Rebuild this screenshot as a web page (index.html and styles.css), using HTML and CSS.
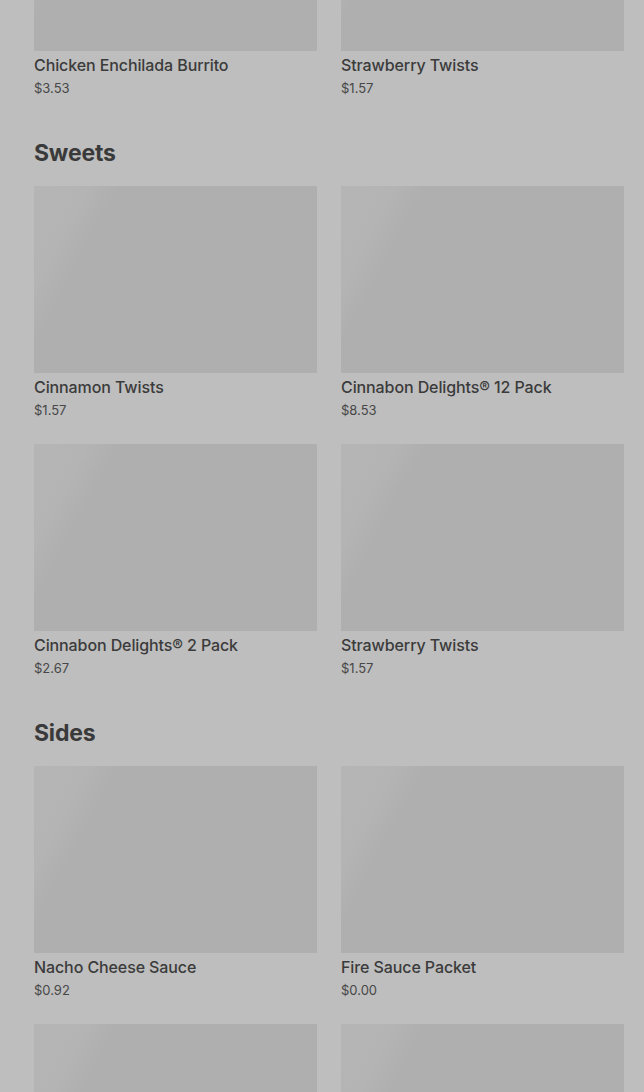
FILE: index.html
```html
<!DOCTYPE html>
<html lang="en">
<head>
    <meta charset="UTF-8">
    <meta name="viewport" content="width=device-width, initial-scale=1.0">
    <title>Menu</title>
    <link rel="stylesheet" href="styles.css">
</head>
<body>
    <div class="menu">
        <section class="section">
            <div class="grid">
                <div class="item">
                    <div class="thumb"></div>
                    <div class="name">Chicken Enchilada Burrito</div>
                    <div class="price">$3.53</div>
                </div>
                <div class="item">
                    <div class="thumb"></div>
                    <div class="name">Strawberry Twists</div>
                    <div class="price">$1.57</div>
                </div>
            </div>
        </section>

        <section class="section">
            <h2>Sweets</h2>
            <div class="grid">
                <div class="item">
                    <div class="thumb"></div>
                    <div class="name">Cinnamon Twists</div>
                    <div class="price">$1.57</div>
                </div>
                <div class="item">
                    <div class="thumb"></div>
                    <div class="name">Cinnabon Delights® 12 Pack</div>
                    <div class="price">$8.53</div>
                </div>
                <div class="item">
                    <div class="thumb"></div>
                    <div class="name">Cinnabon Delights® 2 Pack</div>
                    <div class="price">$2.67</div>
                </div>
                <div class="item">
                    <div class="thumb"></div>
                    <div class="name">Strawberry Twists</div>
                    <div class="price">$1.57</div>
                </div>
            </div>
        </section>

        <section class="section">
            <h2>Sides</h2>
            <div class="grid">
                <div class="item">
                    <div class="thumb"></div>
                    <div class="name">Nacho Cheese Sauce</div>
                    <div class="price">$0.92</div>
                </div>
                <div class="item">
                    <div class="thumb"></div>
                    <div class="name">Fire Sauce Packet</div>
                    <div class="price">$0.00</div>
                </div>
                <!-- next row, only the pictures are in view -->
                <div class="item">
                    <div class="thumb"></div>
                </div>
                <div class="item">
                    <div class="thumb"></div>
                </div>
            </div>
        </section>
    </div>
</body>
</html>
```

FILE: styles.css
```css
body {
    background: #bebebe;
    color: #3c3c3c;
    font-family: 'Inter', 'Roboto', Arial, sans-serif;
    margin: 0;
    height: 1092px;
    overflow: hidden;
}
.menu {
    margin-top: -136px;
    padding: 0 20px 0 34px;
}
.section h2 {
    font-size: 23px;
    line-height: 32px;
    font-weight: 700;
    color: #3a3a3a;
    margin: 40px 0 17px 0;
    letter-spacing: -0.2px;
}
.grid {
    display: grid;
    grid-template-columns: 1fr 1fr;
    column-gap: 24px;
    row-gap: 25px;
}
.thumb {
    height: 187px;
    background: linear-gradient(118deg, #b5b5b5 0%, #b4b4b4 14%, #afafaf 22%, #afafaf 100%);
}
.name {
    margin-top: 4px;
    font-size: 16px;
    line-height: 20px;
    font-weight: 500;
    color: #3b3b3b;
    letter-spacing: -0.1px;
}
.price {
    margin-top: 4px;
    font-size: 13px;
    line-height: 18px;
    color: #474747;
}
```
